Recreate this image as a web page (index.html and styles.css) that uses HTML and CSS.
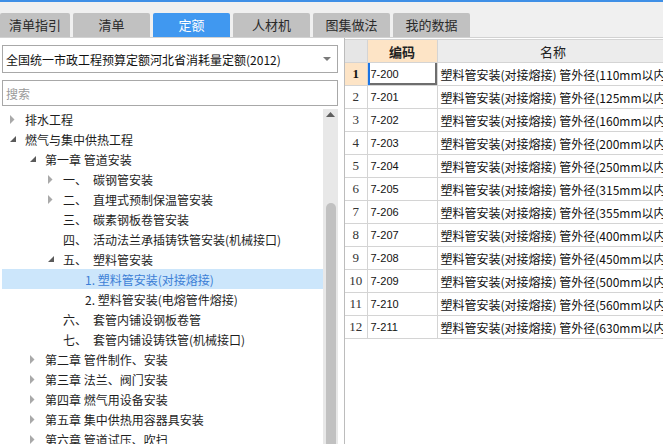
FILE: index.html
```html
<!DOCTYPE html>
<html lang="zh">
<head>
<meta charset="utf-8">
<title>定额</title>
<link rel="stylesheet" href="styles.css">
</head>
<body>
<div class="app">
  <div class="topline"></div>
  <div class="tabs">
    <div class="tab">清单指引</div>
    <div class="tab">清单</div>
    <div class="tab active">定额</div>
    <div class="tab">人材机</div>
    <div class="tab">图集做法</div>
    <div class="tab">我的数据</div>
  </div>
  <div class="main">
    <div class="left">
      <div class="select">
        <span class="select-text">全国统一市政工程预算定额河北省消耗量定额(2012)</span>
        <svg class="select-arrow" width="8" height="5" viewBox="0 0 8 5"><polygon points="0,0 8,0 4,4" fill="#7a7a7a"/></svg>
      </div>
      <div class="search"><span class="placeholder">搜索</span></div>
      <div class="treebox">
        <div class="tree">
          <div class="row l0"><span class="tg"><svg width="5" height="9" viewBox="0 0 5 9"><polygon points="0,0 4.5,4.5 0,9" fill="#a9a9a9"/></svg></span><span class="tx">排水工程</span></div>
          <div class="row l0"><span class="tg"><svg width="6" height="6" viewBox="0 0 6 6"><polygon points="6,0 6,6 0,6" fill="#5a5a5a"/></svg></span><span class="tx">燃气与集中供热工程</span></div>
          <div class="row l1"><span class="tg"><svg width="6" height="6" viewBox="0 0 6 6"><polygon points="6,0 6,6 0,6" fill="#5a5a5a"/></svg></span><span class="tx">第一章 管道安装</span></div>
          <div class="row l2"><span class="tg"><svg width="5" height="9" viewBox="0 0 5 9"><polygon points="0,0 4.5,4.5 0,9" fill="#a9a9a9"/></svg></span><span class="tx"><span class="num">一、</span>碳钢管安装</span></div>
          <div class="row l2"><span class="tg"><svg width="5" height="9" viewBox="0 0 5 9"><polygon points="0,0 4.5,4.5 0,9" fill="#a9a9a9"/></svg></span><span class="tx"><span class="num">二、</span>直埋式预制保温管安装</span></div>
          <div class="row l2"><span class="tg"></span><span class="tx"><span class="num">三、</span>碳素钢板卷管安装</span></div>
          <div class="row l2"><span class="tg"></span><span class="tx"><span class="num">四、</span>活动法兰承插铸铁管安装(机械接口)</span></div>
          <div class="row l2"><span class="tg"><svg width="6" height="6" viewBox="0 0 6 6"><polygon points="6,0 6,6 0,6" fill="#5a5a5a"/></svg></span><span class="tx"><span class="num">五、</span>塑料管安装</span></div>
          <div class="row l3 selected"><span class="tg"></span><span class="tx">1. 塑料管安装(对接熔接)</span></div>
          <div class="row l3"><span class="tg"></span><span class="tx">2. 塑料管安装(电熔管件熔接)</span></div>
          <div class="row l2"><span class="tg"></span><span class="tx"><span class="num">六、</span>套管内铺设钢板卷管</span></div>
          <div class="row l2"><span class="tg"></span><span class="tx"><span class="num">七、</span>套管内铺设铸铁管(机械接口)</span></div>
          <div class="row l1"><span class="tg"><svg width="5" height="9" viewBox="0 0 5 9"><polygon points="0,0 4.5,4.5 0,9" fill="#a9a9a9"/></svg></span><span class="tx">第二章 管件制作、安装</span></div>
          <div class="row l1"><span class="tg"><svg width="5" height="9" viewBox="0 0 5 9"><polygon points="0,0 4.5,4.5 0,9" fill="#a9a9a9"/></svg></span><span class="tx">第三章 法兰、阀门安装</span></div>
          <div class="row l1"><span class="tg"><svg width="5" height="9" viewBox="0 0 5 9"><polygon points="0,0 4.5,4.5 0,9" fill="#a9a9a9"/></svg></span><span class="tx">第四章 燃气用设备安装</span></div>
          <div class="row l1"><span class="tg"><svg width="5" height="9" viewBox="0 0 5 9"><polygon points="0,0 4.5,4.5 0,9" fill="#a9a9a9"/></svg></span><span class="tx">第五章 集中供热用容器具安装</span></div>
          <div class="row l1"><span class="tg"><svg width="5" height="9" viewBox="0 0 5 9"><polygon points="0,0 4.5,4.5 0,9" fill="#a9a9a9"/></svg></span><span class="tx">第六章 管道试压、吹扫</span></div>
        </div>
        <div class="scrollbar">
          <svg class="sb-up" width="9" height="5" viewBox="0 0 9 5"><polygon points="0,5 4.5,0 9,5" fill="#5f5f5f"/></svg>
          <div class="sb-thumb"></div>
        </div>
      </div>
    </div>
    <div class="right">
      <table class="grid">
        <colgroup><col class="c-no"><col class="c-code"><col class="c-name"></colgroup>
        <thead>
          <tr><th class="h-no"></th><th class="h-code">编码</th><th class="h-name">名称</th></tr>
        </thead>
        <tbody>
          <tr class="cur"><td class="no">1</td><td class="code sel">7-200</td><td class="name">塑料管安装(对接熔接) 管外径(110mm以内)</td></tr>
          <tr><td class="no">2</td><td class="code">7-201</td><td class="name">塑料管安装(对接熔接) 管外径(125mm以内)</td></tr>
          <tr><td class="no">3</td><td class="code">7-202</td><td class="name">塑料管安装(对接熔接) 管外径(160mm以内)</td></tr>
          <tr><td class="no">4</td><td class="code">7-203</td><td class="name">塑料管安装(对接熔接) 管外径(200mm以内)</td></tr>
          <tr><td class="no">5</td><td class="code">7-204</td><td class="name">塑料管安装(对接熔接) 管外径(250mm以内)</td></tr>
          <tr><td class="no">6</td><td class="code">7-205</td><td class="name">塑料管安装(对接熔接) 管外径(315mm以内)</td></tr>
          <tr><td class="no">7</td><td class="code">7-206</td><td class="name">塑料管安装(对接熔接) 管外径(355mm以内)</td></tr>
          <tr><td class="no">8</td><td class="code">7-207</td><td class="name">塑料管安装(对接熔接) 管外径(400mm以内)</td></tr>
          <tr><td class="no">9</td><td class="code">7-208</td><td class="name">塑料管安装(对接熔接) 管外径(450mm以内)</td></tr>
          <tr><td class="no">10</td><td class="code">7-209</td><td class="name">塑料管安装(对接熔接) 管外径(500mm以内)</td></tr>
          <tr><td class="no">11</td><td class="code">7-210</td><td class="name">塑料管安装(对接熔接) 管外径(560mm以内)</td></tr>
          <tr><td class="no">12</td><td class="code">7-211</td><td class="name">塑料管安装(对接熔接) 管外径(630mm以内)</td></tr>
        </tbody>
      </table>
    </div>
  </div>
</div>
</body>
</html>
```
FILE: styles.css
```css
* { box-sizing: border-box; }
html, body { margin: 0; padding: 0; }
body {
  width: 663px;
  height: 444px;
  overflow: hidden;
  background: #ffffff;
  font-family: "Noto Sans CJK SC", "Noto Sans", sans-serif;
  color: #1e1e1e;
}
.app { display: flex; flex-direction: column; height: 444px; }
.topline { height: 2px; background: #3f8fe6; }
.tabs {
  display: flex;
  gap: 3px;
  padding-top: 11px;
  background: #f0f0f0;
  border-bottom: 1px solid #d2d2d2;
}
.tab {
  width: 77px;
  height: 24px;
  background: #c1c1c1;
  border-radius: 2px 2px 0 0;
  font-size: 13px;
  line-height: 24px;
  text-align: center;
  color: #2a2a2a;
}
.tab:first-child { width: 70px; }
.tab.active { background: #4098f0; color: #ffffff; }

.main { flex: 1; display: flex; min-height: 0; }
.left {
  width: 344px;
  padding: 7px 0 0 2px;
  display: flex;
  flex-direction: column;
  background: #ffffff;
}
.select {
  width: 336px;
  height: 28px;
  border: 1px solid #a8a8a8;
  display: flex;
  align-items: center;
  justify-content: space-between;
  padding: 0 6px 0 3px;
  font-size: 12px;
  color: #111;
}
.select-arrow { margin-top: 1px; }
.search {
  margin-top: 7px;
  width: 336px;
  height: 26px;
  border: 1px solid #a8a8a8;
  display: flex;
  align-items: center;
  padding-left: 3px;
  font-size: 12px;
}
.placeholder { color: #9a9a9a; }

.treebox {
  margin-top: 3px;
  flex: 1;
  display: flex;
  min-height: 0;
  overflow: hidden;
}
.tree { width: 321px; }
.row {
  height: 20px;
  display: flex;
  align-items: center;
  font-size: 12px;
  white-space: nowrap;
  color: #1e1e1e;
}
.row.l1 { padding-left: 20px; }
.row.l2 { padding-left: 38px; }
.row.l3 { padding-left: 60px; }
.tg {
  width: 23px;
  height: 20px;
  display: flex;
  align-items: center;
  padding-left: 8px;
  flex: none;
}
.row.l0 .tg, .row.l1 .tg { padding-left: 8px; }
.num { display: inline-block; width: 30px; }
.row.selected { background: #cce6fb; }
.row.selected .tx { color: #3c7fd6; }

.scrollbar {
  width: 15px;
  background: #e8e8e8;
  position: relative;
  display: flex;
  flex-direction: column;
  align-items: center;
}
.sb-up { margin-top: 3px; }
.sb-thumb {
  margin-top: 86px;
  width: 10px;
  flex: 1;
  background: #c1c1c1;
  border-radius: 5px 5px 0 0;
}

.right {
  flex: 1;
  border-left: 1px solid #bcbcbc;
  overflow: hidden;
  padding-top: 1px;
  background: #ffffff;
}
.grid {
  border-collapse: collapse;
  table-layout: fixed;
  width: 324px;
  font-size: 12px;
}
.c-no { width: 22px; }
.c-code { width: 70px; }
.c-name { width: 232px; }
.grid th, .grid td {
  border: 1px solid #d4d4d4;
  height: 23px;
  padding: 0;
  white-space: nowrap;
  overflow: hidden;
}
.grid thead th {
  font-size: 13px;
  font-weight: normal;
  text-align: center;
  color: #222;
}
.grid th:first-child, .grid td:first-child { border-left: none; }
.h-no { background: #e6e6e6; }
.h-code { background: #fde4c6; font-weight: bold !important; }
.h-name { background: #ececec; }
.no {
  text-align: center;
  font-family: "Liberation Serif", "Times New Roman", serif;
  font-size: 13px;
  color: #333;
}
.cur .no { background: #fde4c6; font-weight: bold; color: #111; }
.code {
  padding-left: 3px !important;
  font-family: "Liberation Sans", Arial, sans-serif;
  font-size: 11px;
  color: #111;
}
.code.sel {
  box-shadow: inset 2px 0 0 #1b74e4, inset -2px -2px 0 #6e6e6e;
}
.name {
  padding-left: 3px !important;
  color: #111;
  text-overflow: clip;
}
```
